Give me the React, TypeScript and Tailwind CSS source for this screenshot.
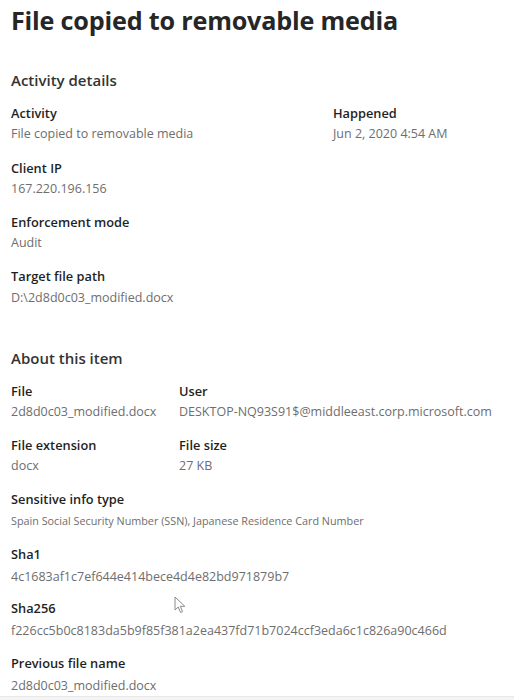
import React from "react";

const font = { fontFamily: '"Open Sans", "Noto Sans", sans-serif' };

function Field({
  label,
  value,
  small,
  gap = "mt-px",
}: {
  label: string;
  value: string;
  small?: boolean;
  gap?: string;
}) {
  return (
    <div className="flex flex-col">
      <div className="text-[12.8px] leading-5 font-semibold text-[#1f1f1f] whitespace-nowrap">{label}</div>
      <div
        className={`${gap} ${small ? "text-[10.8px]" : "text-[12.5px]"} leading-5 text-[#6e6e6e] whitespace-nowrap`}
      >
        {value}
      </div>
    </div>
  );
}

export default function App() {
  return (
    <div className="relative w-[514px] h-[700px] bg-white flex flex-col overflow-hidden" style={font}>
      <div className="flex-1 flex flex-col pl-[11px]">
        <h1 className="mt-[4px] text-[25.2px] leading-8 font-bold text-[#262626] tracking-[-0.2px] whitespace-nowrap">
          File copied to removable media
        </h1>

        <h2 className="mt-[34px] text-[15px] leading-5 font-semibold text-[#333333]">Activity details</h2>

        <div className="mt-[13px] grid grid-cols-[322px_1fr]">
          <Field label="Activity" value="File copied to removable media" />
          <Field label="Happened" value="Jun 2, 2020 4:54 AM" />
        </div>
        <div className="mt-[14px]">
          <Field label="Client IP" value="167.220.196.156" />
        </div>
        <div className="mt-[13px]">
          <Field label="Enforcement mode" value="Audit" />
        </div>
        <div className="mt-[13px]">
          <Field label="Target file path" value="D:\2d8d0c03_modified.docx" gap="mt-[2px]" />
        </div>

        <h2 className="mt-[40px] text-[15px] leading-5 font-semibold text-[#333333]">About this item</h2>

        <div className="mt-[13px] grid grid-cols-[168px_1fr]">
          <Field label="File" value="2d8d0c03_modified.docx" />
          <Field label="User" value="DESKTOP-NQ93S91$@middleeast.corp.microsoft.com" />
        </div>
        <div className="mt-[13px] grid grid-cols-[168px_1fr]">
          <Field label="File extension" value="docx" />
          <Field label="File size" value="27 KB" />
        </div>
        <div className="mt-[13px]">
          <Field label="Sensitive info type" value="Spain Social Security Number (SSN), Japanese Residence Card Number" small gap="mt-[2px]" />
        </div>
        <div className="mt-[13px]">
          <Field label="Sha1" value="4c1683af1c7ef644e414bece4d4e82bd971879b7" gap="mt-[3px]" />
        </div>
        <div className="mt-[11px]">
          <Field label="Sha256" value="f226cc5b0c8183da5b9f85f381a2ea437fd71b7024ccf3eda6c1c826a90c466d" gap="mt-[3px]" />
        </div>
        <div className="mt-[12px]">
          <Field label="Previous file name" value="2d8d0c03_modified.docx" gap="mt-[3px]" />
        </div>
      </div>
      <div className="h-[5px] bg-[#f4f4f4] border-t border-[#e8e8e8]" />

      <svg
        className="absolute left-[174px] top-[596px]"
        width="14"
        height="18"
        viewBox="0 0 14 18"
      >
        <path
          d="M1 1 L1 14 L4.2 11 L6.6 16.5 L8.6 15.6 L6.3 10.3 L10.8 10.3 Z"
          fill="#ffffff"
          stroke="#8a8a8a"
          strokeWidth="1"
          strokeLinejoin="round"
        />
      </svg>
    </div>
  );
}
